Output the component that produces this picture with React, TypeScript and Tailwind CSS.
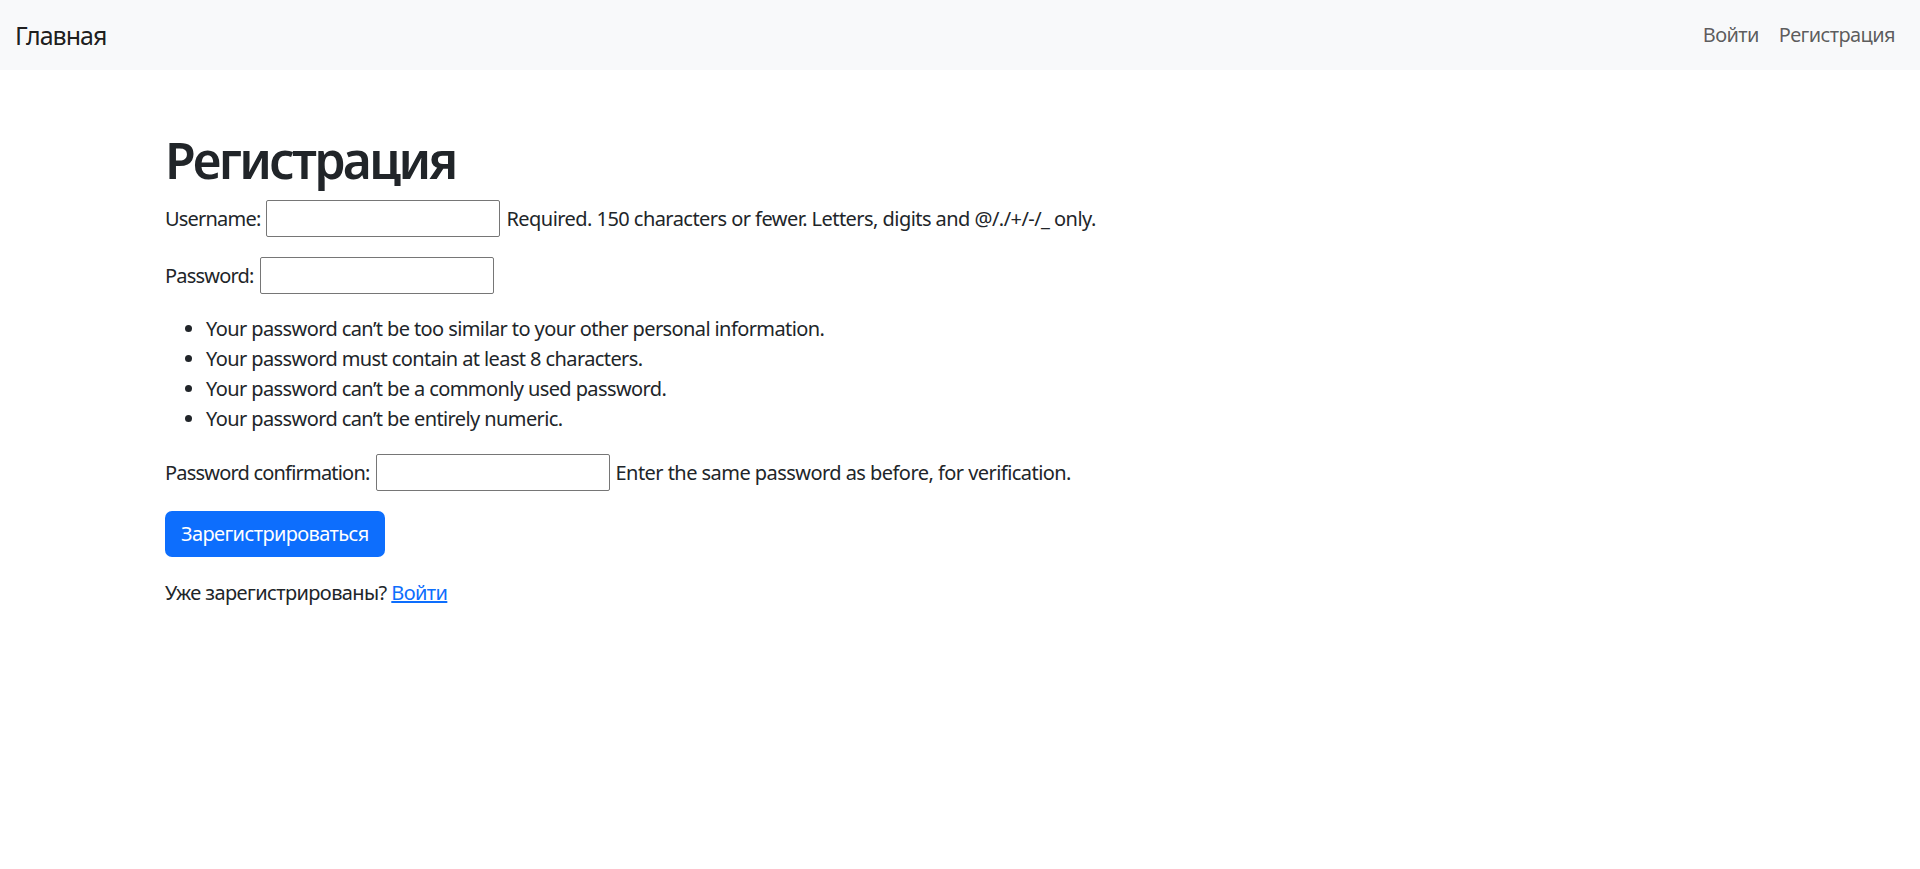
import React from "react";

const FONT = "font-['Noto_Sans','Liberation_Sans',sans-serif]";

const HINTS = [
  "Your password can’t be too similar to your other personal information.",
  "Your password must contain at least 8 characters.",
  "Your password can’t be a commonly used password.",
  "Your password can’t be entirely numeric.",
];

function Field({ label, help }: { label: string; help?: string }) {
  return (
    <p className="mb-[20px] flex items-center">
      <label className="tracking-[-0.8px]">{label}</label>
      <input
        type="text"
        className="ml-[6px] h-[37px] w-[234px] rounded-[2px] border border-[#767676] bg-white px-[2px]"
      />
      {help && <span className="ml-[6px] tracking-[-0.55px]">{help}</span>}
    </p>
  );
}

export default function App() {
  return (
    <div className={`min-h-screen bg-white text-[20px] leading-[30px] text-[#212529] tracking-[-0.6px] ${FONT}`}>
      <nav className="flex h-[70px] items-center justify-between bg-[#f8f9fa] px-[15px]">
        <a className="text-[25px] tracking-[-1px] text-black/90">Главная</a>
        <div className="flex items-center">
          <a className="px-[10px] text-black/65">Войти</a>
          <a className="px-[10px] text-black/65">Регистрация</a>
        </div>
      </nav>

      <main className="px-[165px] pt-[60px]">
        <h1 className="mb-[10px] text-[50px] font-semibold leading-[60px] tracking-[-2.6px]">Регистрация</h1>
        <form>
          <Field
            label="Username:"
            help="Required. 150 characters or fewer. Letters, digits and @/./+/-/_ only."
          />
          <Field label="Password:" />
          <ul className="mb-[20px] list-disc pl-[41px]">
            {HINTS.map((h) => (
              <li key={h}>{h}</li>
            ))}
          </ul>
          <Field
            label="Password confirmation:"
            help="Enter the same password as before, for verification."
          />
          <button
            type="button"
            className="h-[46px] rounded-[7px] bg-[#0d6efd] px-[16px] text-white"
          >
            Зарегистрироваться
          </button>
        </form>
        <p className="mt-[21px]">
          Уже зарегистрированы?{" "}
          <a className="text-[#0d6efd] underline">Войти</a>
        </p>
      </main>
    </div>
  );
}
